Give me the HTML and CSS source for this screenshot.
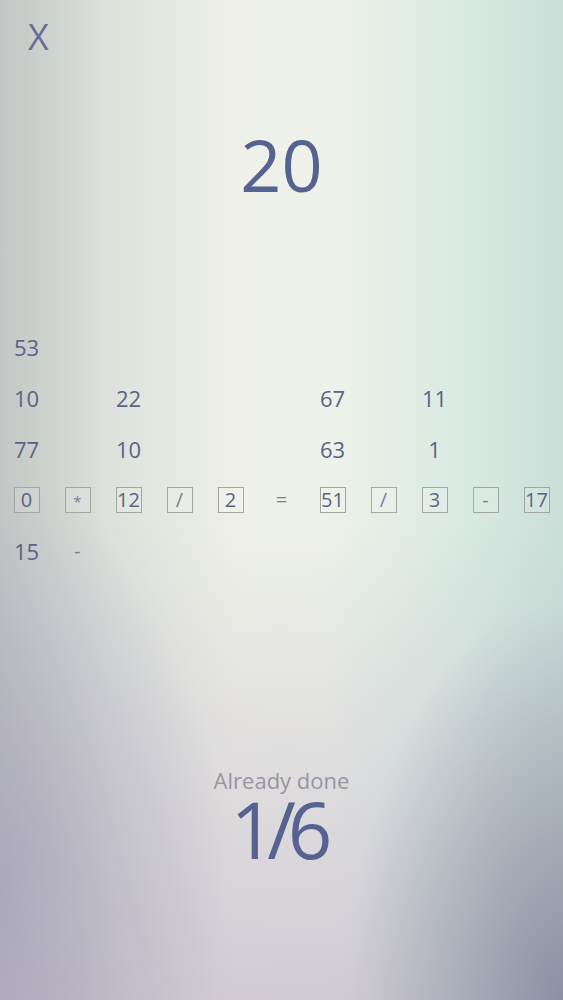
FILE: index.html
```html
<!DOCTYPE html>
<html lang="en">
<head>
  <meta charset="UTF-8">
  <title>Make the number</title>
  <link rel="stylesheet" href="styles.css">
</head>
<body>
  <div class="screen">
    <div class="close">X</div>
    <div class="target">20</div>

    <div class="board">
      <!-- row 1 -->
      <div class="cell">53</div>
      <div class="cell"></div><div class="cell"></div><div class="cell"></div><div class="cell"></div>
      <div class="cell"></div><div class="cell"></div><div class="cell"></div><div class="cell"></div>
      <div class="cell"></div><div class="cell"></div>

      <!-- row 2 -->
      <div class="cell">10</div>
      <div class="cell"></div>
      <div class="cell">22</div>
      <div class="cell"></div><div class="cell"></div><div class="cell"></div>
      <div class="cell">67</div>
      <div class="cell"></div>
      <div class="cell">11</div>
      <div class="cell"></div><div class="cell"></div>

      <!-- row 3 -->
      <div class="cell">77</div>
      <div class="cell"></div>
      <div class="cell">10</div>
      <div class="cell"></div><div class="cell"></div><div class="cell"></div>
      <div class="cell">63</div>
      <div class="cell"></div>
      <div class="cell">1</div>
      <div class="cell"></div><div class="cell"></div>

      <!-- row 4: the expression -->
      <div class="cell"><span class="box">0</span></div>
      <div class="cell"><span class="box op star">*</span></div>
      <div class="cell"><span class="box">12</span></div>
      <div class="cell"><span class="box op">/</span></div>
      <div class="cell"><span class="box">2</span></div>
      <div class="cell op">=</div>
      <div class="cell"><span class="box">51</span></div>
      <div class="cell"><span class="box op">/</span></div>
      <div class="cell"><span class="box">3</span></div>
      <div class="cell"><span class="box op">-</span></div>
      <div class="cell"><span class="box">17</span></div>

      <!-- row 5 -->
      <div class="cell">15</div>
      <div class="cell op">-</div>
    </div>

    <div class="progress">
      <div class="progress-label">Already done</div>
      <div class="progress-count">1/6</div>
    </div>
  </div>
</body>
</html>
```

FILE: styles.css
```css
html, body {
  margin: 0;
  height: 100%;
}

body {
  font-family: "Open Sans", "Noto Sans", sans-serif;
  color: #5a6288;
  background:
    radial-gradient(ellipse 38% 40% at 100% 100%, rgba(105, 112, 135, 0.6), rgba(105, 112, 135, 0)),
    radial-gradient(ellipse 40% 40% at 0% 88%, rgba(140, 138, 172, 0.4), rgba(140, 138, 172, 0)),
    linear-gradient(to bottom, rgba(190, 178, 198, 0) 52%, rgba(185, 172, 194, 0.55) 100%),
    linear-gradient(to right, #c3c7c5 0%, #dde2dc 20%, #eff1e9 42%, #eef2ea 58%, #d9eae2 82%, #cbdfd8 100%);
  overflow: hidden;
}

.screen {
  display: flex;
  flex-direction: column;
  min-height: 1000px;
}

.close {
  font-size: 36px;
  line-height: 40px;
  padding: 17px 0 0 28px;
  color: #6a6c9c;
}

.target {
  margin-top: 67px;
  font-size: 72px;
  line-height: 80px;
  text-align: center;
  color: #56628f;
}

.board {
  margin-top: 117px;
  padding-left: 1px;
  display: grid;
  grid-template-columns: repeat(11, 51px);
  grid-auto-rows: 51px;
}

.cell {
  display: flex;
  align-items: center;
  justify-content: center;
  font-size: 22px;
  color: #5c6386;
}

.cell.op {
  color: #7c8099;
  font-size: 20px;
}

.box {
  width: 24px;
  height: 24px;
  border: 1px solid #a3a7a4;
  background: rgba(255, 255, 255, 0.12);
  display: flex;
  align-items: center;
  justify-content: center;
  font-size: 20px;
  line-height: 1;
  color: #5c6386;
}

.box.op {
  color: #7c8099;
}

.box.star {
  font-size: 15px;
  padding-top: 3px;
  box-sizing: border-box;
  width: 26px;
  height: 26px;
}

.progress {
  margin-top: 191px;
  text-align: center;
}

.progress-label {
  font-size: 22px;
  line-height: 26px;
  color: #9a95a0;
}

.progress-count {
  font-size: 78px;
  line-height: 72px;
  letter-spacing: -8px;
  text-indent: -8px;
  color: #56628f;
}
```
